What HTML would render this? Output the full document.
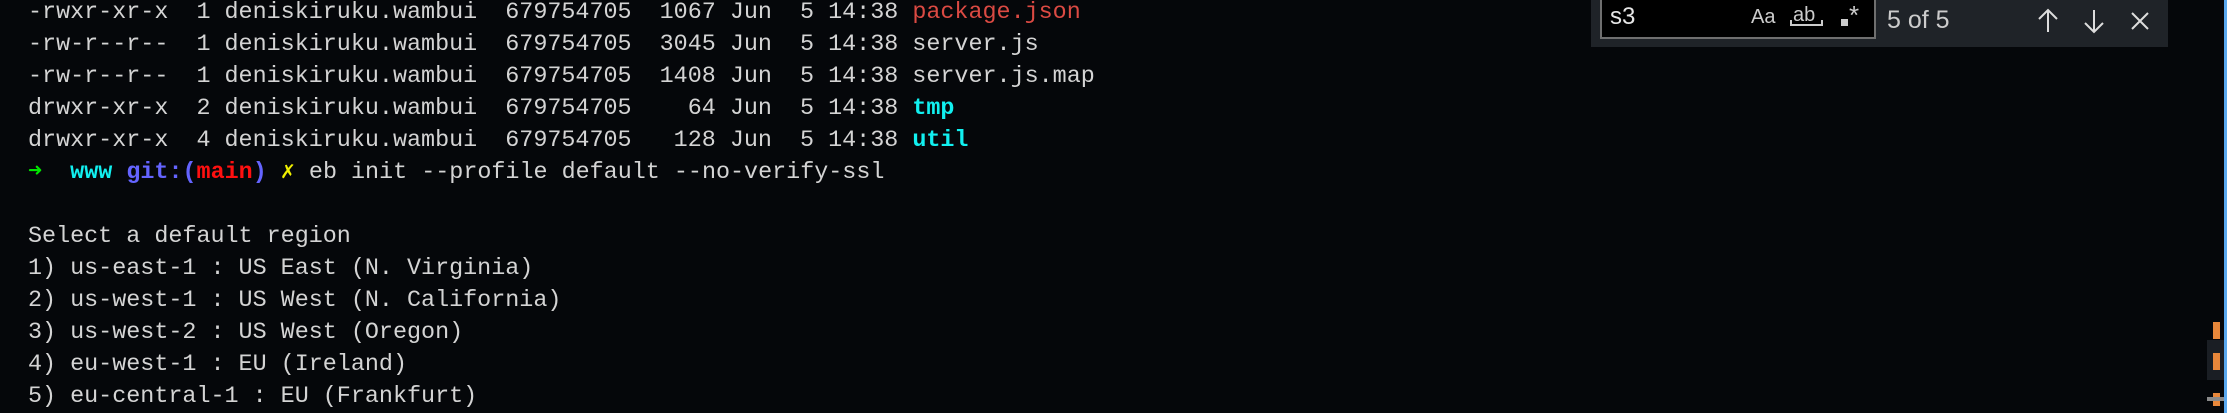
<!DOCTYPE html>
<html><head><meta charset="utf-8"><style>
html,body{margin:0;padding:0;background:#05070a;width:2227px;height:413px;overflow:hidden;position:relative}
.t{position:absolute;left:28px;top:-3px;font-family:"Liberation Mono",monospace;font-size:23.4px;line-height:32px;color:#d4d4d4;white-space:pre}
.r{color:#db4a43}.c{color:#11f0f0;font-weight:bold}.g{color:#00e600}.b{color:#6464ff;font-weight:bold}.m{color:#ff1010;font-weight:bold}.y{color:#f0f000}
.w{position:absolute;left:1591px;top:0;width:577px;height:47px;background:#1f2328}
.in{position:absolute;left:9px;top:-2px;width:272px;height:39px;border:2px solid #6f6f6f;border-top:none;background:#000}
.f{position:absolute;font-family:"Liberation Sans",sans-serif;color:#ccc}
</style></head><body>
<div class="t">-rwxr-xr-x  1 deniskiruku.wambui  679754705  1067 Jun  5 14:38 <span class="r">package.json</span>
-rw-r--r--  1 deniskiruku.wambui  679754705  3045 Jun  5 14:38 server.js
-rw-r--r--  1 deniskiruku.wambui  679754705  1408 Jun  5 14:38 server.js.map
drwxr-xr-x  2 deniskiruku.wambui  679754705    64 Jun  5 14:38 <span class="c">tmp</span>
drwxr-xr-x  4 deniskiruku.wambui  679754705   128 Jun  5 14:38 <span class="c">util</span>
<span class="g">➜</span>  <span class="c">www</span> <span class="b">git:(</span><span class="m">main</span><span class="b">)</span> <span class="y">✗</span> eb init --profile default --no-verify-ssl

Select a default region
1) us-east-1 : US East (N. Virginia)
2) us-west-1 : US West (N. California)
3) us-west-2 : US West (Oregon)
4) eu-west-1 : EU (Ireland)
5) eu-central-1 : EU (Frankfurt)</div>
<div class="w">
 <div class="in"></div>
 <div class="f" style="left:19px;top:3px;font-size:24px;color:#e6e6e6">s3</div>
 <div class="f" style="left:160px;top:6px;font-size:20px">Aa</div>
 <div class="f" style="left:202px;top:4px;font-size:20px">ab</div>
 <div style="position:absolute;left:199px;top:20px;width:29px;height:4px;border:2px solid #ccc;border-top:none"></div>
 <div style="position:absolute;left:250px;top:19px;width:7px;height:7px;background:#ccc"></div>
 <div class="f" style="left:258px;top:0px;font-size:26px">*</div>
 <div class="f" style="left:296px;top:6px;font-size:25px">5 of 5</div>
 <svg style="position:absolute;left:445px;top:8px" width="120" height="26" stroke="#ddd" stroke-width="2" fill="none">
  <path d="M12 2V24M3 11L12 2L21 11"/>
  <path d="M58 2V24M49 15L58 24L67 15"/>
  <path d="M96 5L112 21M112 5L96 21"/>
 </svg>
</div>
<div style="position:absolute;left:2224px;top:0;width:3px;height:413px;background:#5aa9f0"></div>
<div style="position:absolute;left:2207px;top:340px;width:17px;height:40px;background:#1a1e24"></div>
<div style="position:absolute;left:2213px;top:322px;width:7px;height:17px;background:#e8873a"></div>
<div style="position:absolute;left:2213px;top:353px;width:7px;height:17px;background:#e8873a"></div>
<div style="position:absolute;left:2213px;top:393px;width:7px;height:13px;background:#e8873a"></div>
<div style="position:absolute;left:2207px;top:397px;width:17px;height:4px;background:#8a8a8a"></div>
</body></html>
